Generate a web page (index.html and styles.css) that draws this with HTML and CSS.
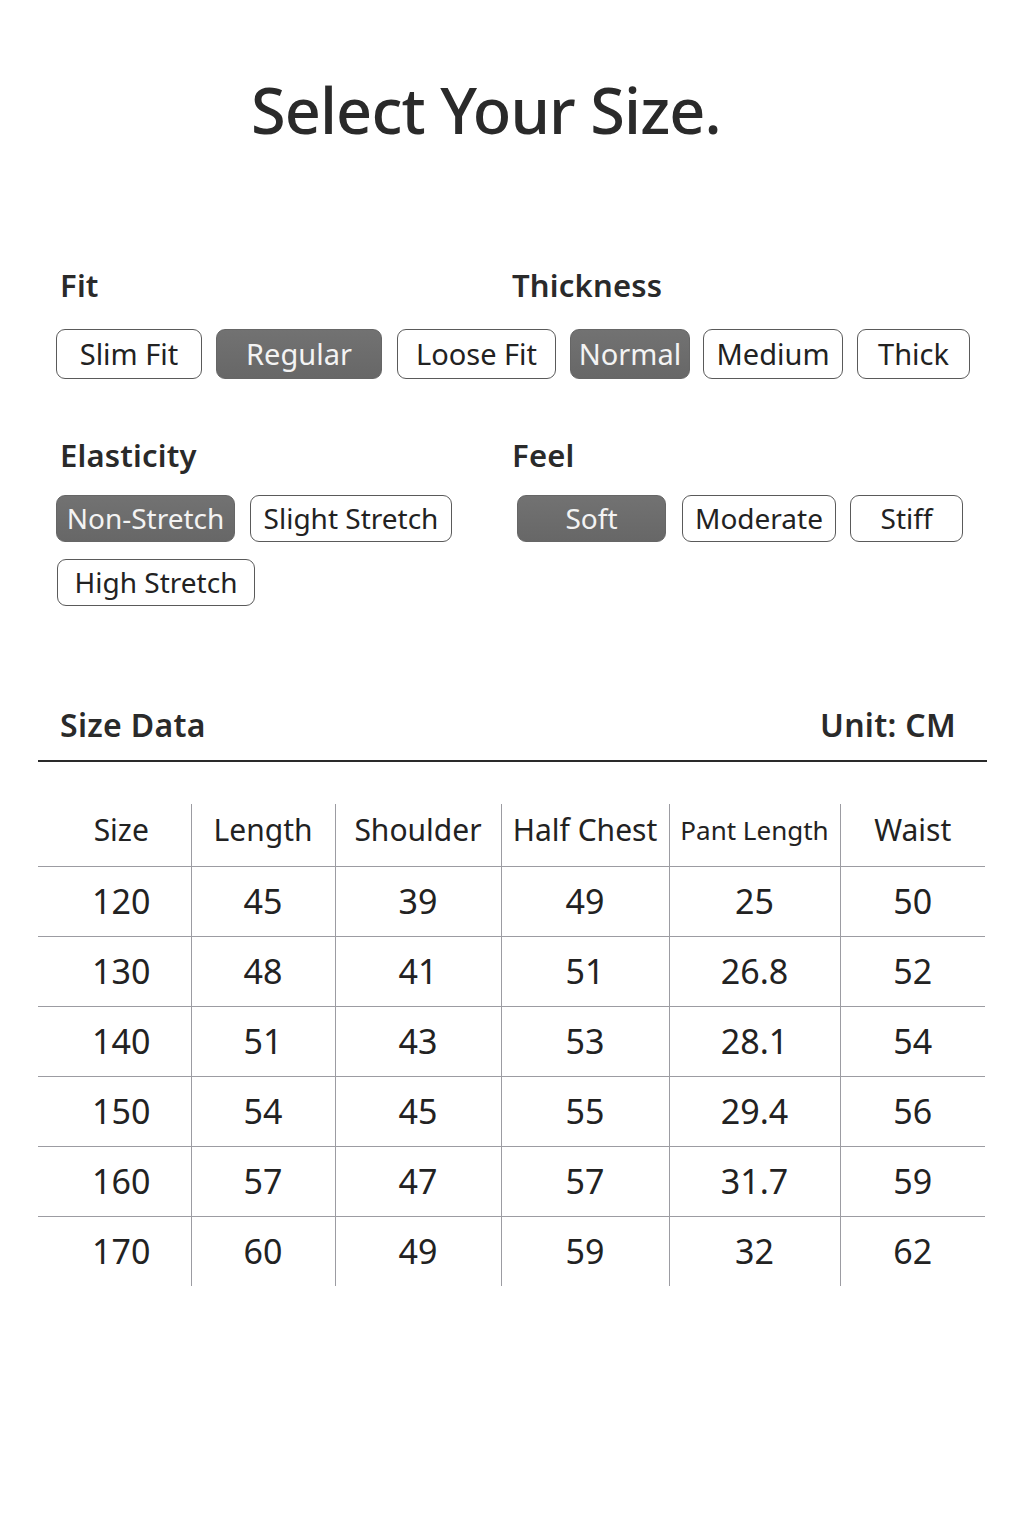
FILE: index.html
```html
<!DOCTYPE html>
<html lang="en">
<head>
<meta charset="utf-8">
<title>Select Your Size</title>
<link rel="stylesheet" href="styles.css">
</head>
<body>
<main class="page">
  <h1 class="title">Select Your Size.</h1>

  <section class="opts opts--one">
    <div class="labels">
      <h2 class="label label--first">Fit</h2>
      <h2 class="label">Thickness</h2>
    </div>
    <div class="pills pills--row1">
      <span class="pill w-slim">Slim Fit</span>
      <span class="pill pill--on w-regular">Regular</span>
      <span class="pill w-loose">Loose Fit</span>
      <span class="pill pill--on w-normal">Normal</span>
      <span class="pill w-medium">Medium</span>
      <span class="pill w-thick">Thick</span>
    </div>
  </section>

  <section class="opts opts--two">
    <div class="group group--left">
      <h2 class="label label--first">Elasticity</h2>
      <div class="pills pills--wrap">
        <span class="pill pill--sm pill--on w-non">Non-Stretch</span>
        <span class="pill pill--sm w-slight">Slight Stretch</span>
        <span class="pill pill--sm w-high">High Stretch</span>
      </div>
    </div>
    <div class="group group--right">
      <h2 class="label">Feel</h2>
      <div class="pills pills--feel">
        <span class="pill pill--sm pill--on w-soft">Soft</span>
        <span class="pill pill--sm w-moderate">Moderate</span>
        <span class="pill pill--sm w-stiff">Stiff</span>
      </div>
    </div>
  </section>

  <section class="data">
    <div class="data-head">
      <h2 class="data-title">Size Data</h2>
      <span class="data-unit">Unit: CM</span>
    </div>
    <table class="sizes">
      <colgroup>
        <col class="c1"><col class="c2"><col class="c3"><col class="c4"><col class="c5"><col class="c6">
      </colgroup>
      <thead>
        <tr>
          <th>Size</th><th>Length</th><th>Shoulder</th><th>Half Chest</th><th class="th-small">Pant Length</th><th>Waist</th>
        </tr>
      </thead>
      <tbody>
        <tr><td>120</td><td>45</td><td>39</td><td>49</td><td>25</td><td>50</td></tr>
        <tr><td>130</td><td>48</td><td>41</td><td>51</td><td>26.8</td><td>52</td></tr>
        <tr><td>140</td><td>51</td><td>43</td><td>53</td><td>28.1</td><td>54</td></tr>
        <tr><td>150</td><td>54</td><td>45</td><td>55</td><td>29.4</td><td>56</td></tr>
        <tr><td>160</td><td>57</td><td>47</td><td>57</td><td>31.7</td><td>59</td></tr>
        <tr><td>170</td><td>60</td><td>49</td><td>59</td><td>32</td><td>62</td></tr>
      </tbody>
    </table>
  </section>
</main>
</body>
</html>
```

FILE: styles.css
```css
* { box-sizing: border-box; }

html, body {
  margin: 0;
  padding: 0;
  background: #ffffff;
}

body {
  font-family: "Noto Sans", "Open Sans", "DejaVu Sans", sans-serif;
  color: #222222;
  width: 1024px;
  min-height: 1536px;
}

.page {
  padding-top: 78px;
}

.title {
  margin: 0;
  padding-left: 251px;
  font-size: 63px;
  line-height: 1;
  font-weight: 500;
  color: #2a2a2a;
  letter-spacing: -0.9px;
}

/* option blocks */
.opts--one {
  margin-top: 129px;
  padding-left: 56px;
}

.labels {
  display: grid;
  grid-template-columns: 456px 1fr;
}

.label {
  margin: 0;
  font-size: 31px;
  line-height: 30px;
  font-weight: 600;
  color: #2a2a2a;
  letter-spacing: 0.2px;
}

.label--first {
  padding-left: 4px;
}

.pills {
  display: flex;
  gap: 14px;
}

.pills--row1 {
  margin-top: 29px;
}

.pill {
  display: flex;
  align-items: center;
  justify-content: center;
  height: 50px;
  padding-bottom: 2px;
  border: 1.5px solid #5a5a5a;
  border-radius: 9px;
  font-size: 29px;
  line-height: 1;
  color: #222;
  background: #ffffff;
  white-space: nowrap;
}

.pill--sm {
  height: 47px;
  font-size: 28px;
}

.pill--on {
  background: linear-gradient(#727272, #676767);
  border-color: #666666;
  color: #f3f3f3;
}

.w-slim { width: 146px; }
.w-regular { width: 166px; }
.w-loose { width: 159px; margin-left: 1px; }
.w-normal { width: 120px; }
.w-medium { width: 140px; margin-left: -1px; }
.w-thick { width: 113px; }

.w-non { width: 179px; }
.w-slight { width: 202px; margin-left: 1px; }
.w-high { width: 198px; margin-left: 1px; }

.w-soft { width: 149px; }
.w-moderate { width: 154px; margin-left: 2px; }
.w-stiff { width: 113px; }

.opts--two {
  margin-top: 61px;
  padding-left: 56px;
  display: grid;
  grid-template-columns: 456px 1fr;
}

.pills--wrap {
  margin-top: 25px;
  flex-wrap: wrap;
  row-gap: 17px;
  width: 420px;
}

.pills--feel {
  margin-top: 25px;
  padding-left: 5px;
}

/* data */
.data {
  margin-top: 103px;
  padding: 0 37px 0 38px;
}

.data-head {
  display: flex;
  justify-content: space-between;
  align-items: baseline;
  padding: 0 31px 19px 22px;
  border-bottom: 2px solid #2a2a2a;
}

.data-title,
.data-unit {
  margin: 0;
  font-size: 32px;
  line-height: 32px;
  font-weight: 600;
  color: #2a2a2a;
  letter-spacing: 0.3px;
}

.sizes {
  margin-top: 42px;
  width: 947px;
  border-collapse: collapse;
  table-layout: fixed;
}

.c1 { width: 153px; }
.c2 { width: 144px; }
.c3 { width: 166px; }
.c4 { width: 168px; }
.c5 { width: 171px; }
.c6 { width: 145px; }

.sizes th,
.sizes td {
  text-align: center;
  padding: 0;
  border-left: 1px solid #9c9ca2;
  color: #222;
}

.sizes th:first-child,
.sizes td:first-child {
  border-left: none;
  padding-left: 14px;
}

.sizes th {
  height: 62px;
  font-size: 30px;
  font-weight: 400;
  padding-bottom: 10px;
  border-bottom: 1px solid #9c9ca2;
}

.sizes th.th-small {
  font-size: 26px;
}

.sizes td {
  height: 70px;
  font-size: 34px;
  border-top: 1px solid #9c9ca2;
}

.sizes tbody tr:first-child td {
  border-top: none;
}
```
